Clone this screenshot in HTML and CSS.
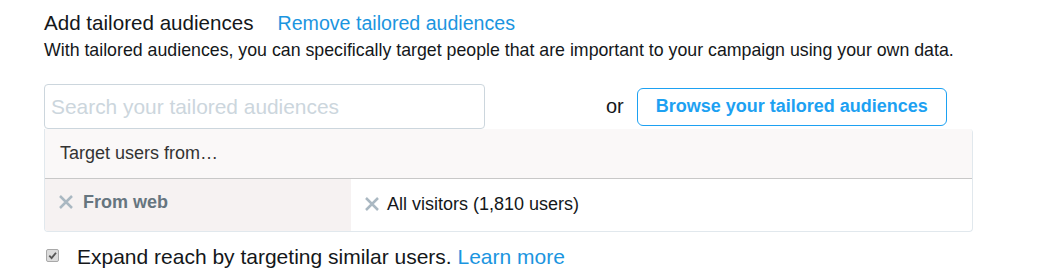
FILE: index.html
```html
<!DOCTYPE html>
<html>
<head>
<meta charset="utf-8">
<link rel="stylesheet" href="styles.css">
</head>
<body>
<div class="panel">
  <div class="title-row">
    <span class="title">Add tailored audiences</span>
    <a class="link remove-link">Remove tailored audiences</a>
  </div>
  <p class="desc">With tailored audiences, you can specifically target people that are important to your campaign using your own data.</p>
  <div class="search-row">
    <div class="search-input">Search your tailored audiences</div>
    <span class="or">or</span>
    <button class="browse-btn">Browse your tailored audiences</button>
  </div>
  <div class="dropdown">
    <div class="dd-header">Target users from…</div>
    <div class="dd-row">
      <div class="dd-left">
        <svg class="x-icon" viewBox="0 0 14 14" width="14" height="14"><path d="M1 1 L13 13 M13 1 L1 13" stroke="#aab8c2" stroke-width="2.5" fill="none"/></svg>
        <span class="from-web">From web</span>
      </div>
      <div class="dd-right">
        <svg class="x-icon" viewBox="0 0 14 14" width="14" height="14"><path d="M1 1 L13 13 M13 1 L1 13" stroke="#aab8c2" stroke-width="2.5" fill="none"/></svg>
        <span class="visitors">All visitors (1,810 users)</span>
      </div>
    </div>
  </div>
  <div class="expand-row">
    <span class="checkbox"><svg viewBox="0 0 12 12" width="12" height="12"><path d="M2.5 6.2 L5 8.8 L9.8 3" stroke="#555" stroke-width="2" fill="none"/></svg></span>
    <span class="expand-text">Expand reach by targeting similar users. <a class="link">Learn more</a></span>
  </div>
</div>
</body>
</html>
```
FILE: styles.css
```css
html, body {
  margin: 0;
  padding: 0;
  background: #ffffff;
}
body {
  font-family: "Liberation Sans", Arial, sans-serif;
  color: #14171a;
}
.panel {
  padding: 11px 0 0 44px;
  width: 929px;
}
.title-row {
  display: flex;
  align-items: baseline;
  height: 24px;
  line-height: 24px;
}
.title {
  font-size: 20.6px;
  color: #14171a;
}
.link {
  color: #1b95e0;
  text-decoration: none;
}
.remove-link {
  font-size: 19.6px;
  margin-left: 24px;
}
.desc {
  margin: 5px 0 0 0;
  font-size: 17.75px;
  line-height: 20px;
  color: #14171a;
}
.search-row {
  display: flex;
  align-items: center;
  margin-top: 24px;
  height: 45px;
}
.search-input {
  box-sizing: border-box;
  width: 441px;
  height: 45px;
  border: 1px solid #ccd6dd;
  border-radius: 4px;
  padding: 0 6px;
  font-size: 20.9px;
  line-height: 43px;
  color: #ccd6dd;
}
.or {
  font-size: 20px;
  margin-left: 121px;
  color: #14171a;
}
.browse-btn {
  box-sizing: border-box;
  margin-left: 13px;
  width: 310px;
  height: 38px;
  border: 1px solid #1da1f2;
  border-radius: 6px;
  background: #fff;
  color: #1da1f2;
  font-family: "Liberation Sans", Arial, sans-serif;
  font-weight: bold;
  font-size: 18px;
  padding: 0;
}
.dropdown {
  box-sizing: border-box;
  width: 929px;
  border: 1px solid #e1e8ed;
  border-top: none;
  border-radius: 0 4px 4px 4px;
  overflow: hidden;
}
.dd-header {
  height: 49px;
  line-height: 49px;
  background: #faf8f8;
  border-bottom: 1px solid #c8c8c8;
  padding-left: 15px;
  font-size: 18px;
  color: #333;
}
.dd-row {
  display: flex;
  height: 52px;
}
.dd-left {
  width: 306px;
  background: #f6f2f2;
  display: flex;
  align-items: center;
  padding-left: 14px;
  box-sizing: border-box;
  padding-bottom: 6px;
}
.dd-left .x-icon {
  margin-right: 10px;
}
.dd-right {
  flex: 1;
  display: flex;
  align-items: center;
  padding-left: 14px;
  padding-bottom: 2px;
}
.x-icon {
  margin-right: 8px;
  flex: none;
}
.from-web {
  font-weight: bold;
  font-size: 18px;
  color: #66757f;
}
.visitors {
  font-size: 18px;
  color: #14171a;
}
.expand-row {
  display: flex;
  align-items: center;
  margin-top: 13px;
  height: 24px;
}
.checkbox {
  box-sizing: border-box;
  width: 13px;
  height: 13px;
  margin-left: 2px;
  border: 1px solid #a9a9a9;
  border-radius: 2px;
  background: #dcdcdc;
  display: flex;
  align-items: center;
  justify-content: center;
  margin-top: -4px;
}
.checkbox svg {
  width: 11px;
  height: 11px;
}
.expand-text {
  margin-left: 18px;
  font-size: 21px;
  color: #14171a;
}
```
